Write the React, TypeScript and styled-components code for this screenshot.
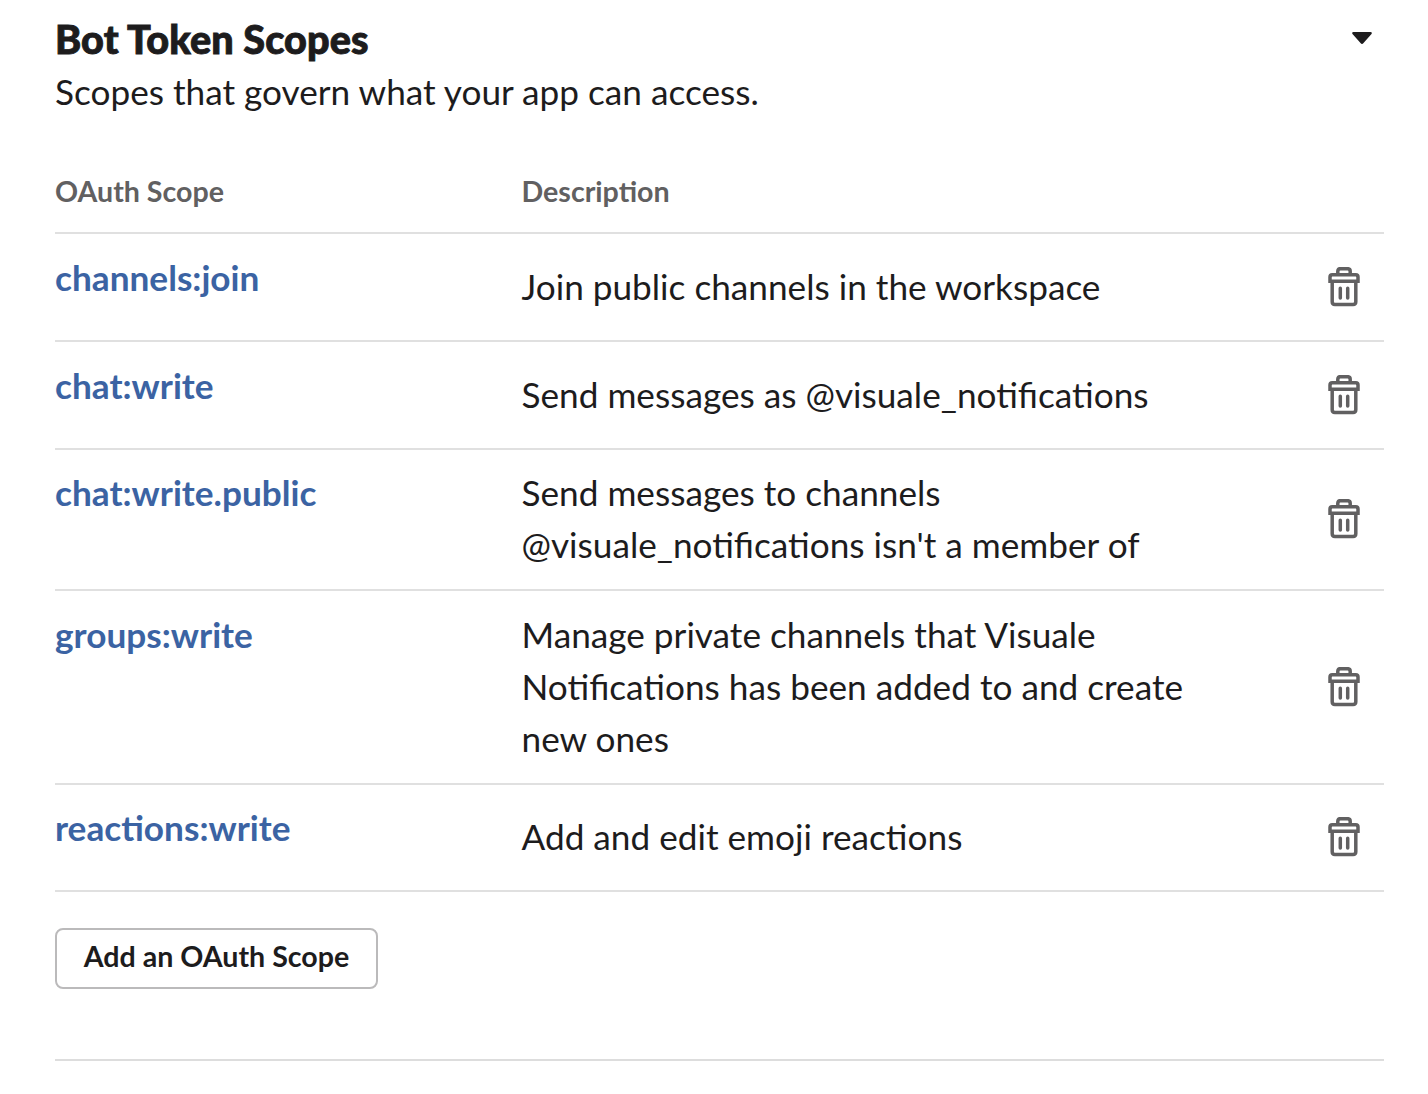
import React from "react";
import styled, { createGlobalStyle } from "styled-components";

const Global = createGlobalStyle`
  * { box-sizing: border-box; }
  body { margin: 0; background: #fff; color: #1d1c1d; font-family: Lato, "Liberation Sans", sans-serif; }
`;
const Page = styled.main`
  width: 1384px;
  height: 1094px;
  padding: 13px 0 0 55px;
  overflow: hidden;
`;
const Header = styled.header`
  display: flex;
  justify-content: space-between;
  height: 52px;
`;
const Title = styled.h2`
  margin: 0;
  font-size: 39.6px;
  line-height: 52px;
  font-weight: 900;
  letter-spacing: 0.1px;
  -webkit-text-stroke: 0.9px #1d1c1d;
`;
const Caret = styled.svg`
  width: 20px;
  height: 13px;
  margin: 19px 12px 0 0;
`;
const Subtitle = styled.p`
  margin: 0;
  height: 97px;
  font-size: 35.2px;
  line-height: 52px;
`;
const Grid = styled.div<{ $height: number }>`
  display: grid;
  grid-template-columns: 466.5px 700px 1fr;
  height: ${(p) => p.$height}px;
  border-bottom: 2px solid #e0e0e0;
`;
const Heading = styled.div`
  padding-top: 9px;
  font-size: 28.6px;
  line-height: 40px;
  font-weight: 700;
  color: #616061;
`;
const Scope = styled.div<{ $top: number }>`
  padding-top: ${(p) => p.$top}px;
  font-size: 35.2px;
  line-height: 52px;
  font-weight: 700;
  color: #3b63a3;
`;
const Description = styled.div<{ $top: number }>`
  padding-top: ${(p) => p.$top}px;
  font-size: 35.2px;
  line-height: 52px;
`;
const Trash = styled.svg<{ $top: number }>`
  justify-self: end;
  width: 32px;
  height: 40px;
  margin: ${(p) => p.$top}px 24px 0 0;
`;
const AddButton = styled.button`
  display: block;
  width: 323px;
  height: 61px;
  margin: 36px 0 0;
  padding: 0 0 6px;
  border: 2px solid #bbbabb;
  border-radius: 8px;
  background: #fff;
  color: #1d1c1d;
  font: 700 28.6px Lato, "Liberation Sans", sans-serif;
`;
const Divider = styled.hr`
  margin: 70px 0 0;
  border: 0;
  border-top: 2px solid #dddddd;
`;

const rows = [
  { scope: "channels:join", lines: ["Join public channels in the workspace"], height: 108, scopeTop: 17, textTop: 26, iconTop: 33 },
  { scope: "chat:write", lines: ["Send messages as @visuale_notifications"], height: 108, scopeTop: 17, textTop: 26, iconTop: 33 },
  { scope: "chat:write.public", lines: ["Send messages to channels", "@visuale_notifications isn't a member of"], height: 141, scopeTop: 16, textTop: 16, iconTop: 49 },
  { scope: "groups:write", lines: ["Manage private channels that Visuale", "Notifications has been added to and create", "new ones"], height: 194, scopeTop: 17, textTop: 17, iconTop: 76 },
  { scope: "reactions:write", lines: ["Add and edit emoji reactions"], height: 107, scopeTop: 16, textTop: 25, iconTop: 32 },
];

export default function App() {
  return (
    <>
      <Global />
      <Page>
        <Header>
          <Title>Bot Token Scopes</Title>
          <Caret viewBox="0 0 20 13"><path d="M1.500 0h17q2 0 1 2l-8 9q-1.500 2-3 0l-8-9q-1-2 1-2z" fill="#1d1c1d" /></Caret>
        </Header>
        <Subtitle>Scopes that govern what your app can access.</Subtitle>
        <Grid $height={72}>
          <Heading>OAuth Scope</Heading>
          <Heading>Description</Heading>
        </Grid>
        {rows.map((r) => (
          <Grid key={r.scope} $height={r.height}>
            <Scope $top={r.scopeTop}>{r.scope}</Scope>
            <Description $top={r.textTop}>{r.lines.map((l) => <div key={l}>{l}</div>)}</Description>
            <Trash $top={r.iconTop} viewBox="0 0 32 40" fill="none" stroke="#616061" strokeWidth="3.5" strokeLinecap="round">
              <path d="M9.800 7V4.300Q9.800 1.700 12.400 1.700h7.200Q22.200 1.700 22.200 4.300V7M2 14.300V10Q2 7.800 4.200 7.800h23.600Q30 7.800 30 10V14.300zM4.200 14.300V34.700Q4.200 37.400 6.900 37.400h18.200Q27.800 37.400 27.800 34.700V14.300M12.300 21.300v9.800M19.700 21.300v9.800" />
            </Trash>
          </Grid>
        ))}
        <AddButton>Add an OAuth Scope</AddButton>
        <Divider />
      </Page>
    </>
  );
}
